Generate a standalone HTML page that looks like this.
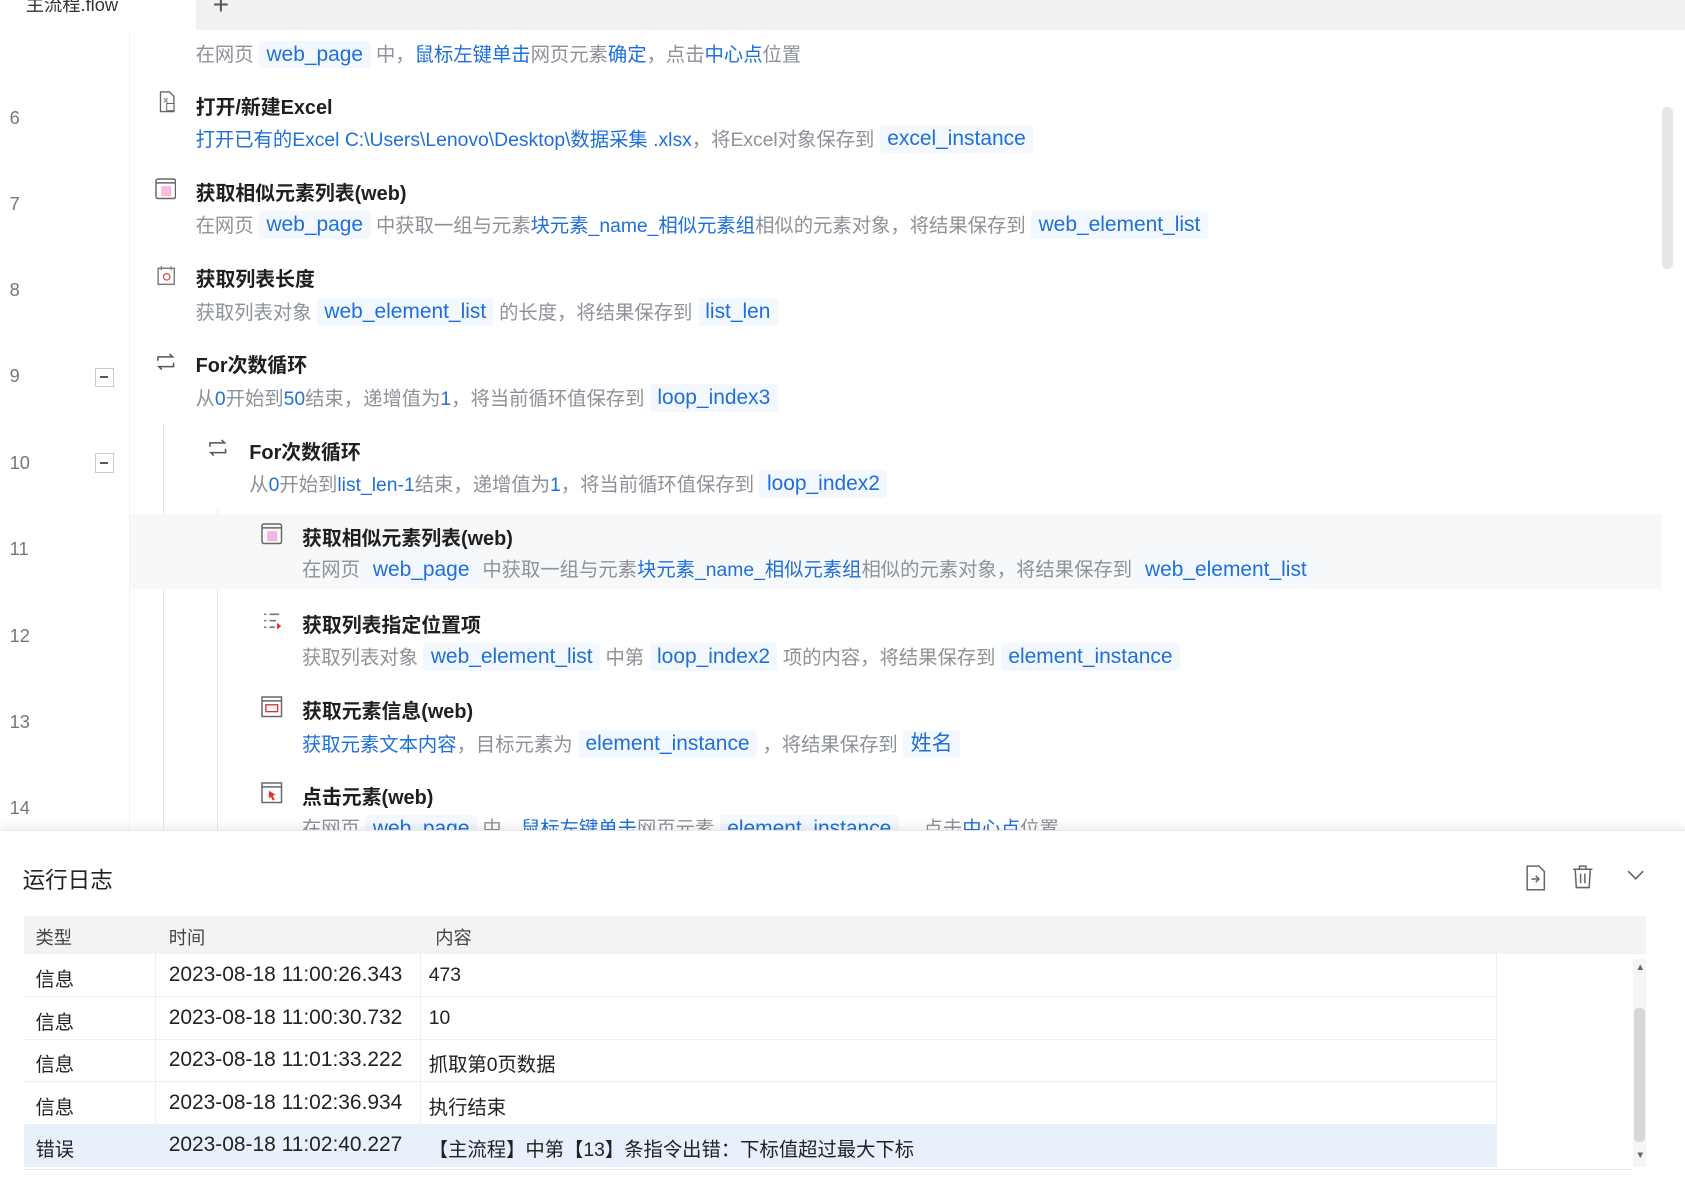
<!DOCTYPE html>
<html><head><meta charset="utf-8">
<style>
html,body{margin:0;padding:0;width:1685px;height:1190px;overflow:hidden;background:#fff;}
#w{position:relative;width:1568px;height:1107px;zoom:1.0746;font-family:"Liberation Sans","Noto Sans CJK SC",sans-serif;color:#222;}
.a{position:absolute;white-space:nowrap;}
.ln{position:absolute;left:9px;font-size:17px;color:#777;}
.t{position:absolute;font-size:18.5px;font-weight:bold;color:#1f1f1f;white-space:nowrap;}
.d{position:absolute;font-size:18px;color:#8d9199;white-space:nowrap;}
.b{color:#1e6fd9;}
.v{color:#1e6fd9;background:#f3f7fe;padding:2px 7px;font-size:19.5px;border-radius:3px;}
.ic{position:absolute;width:20px;height:20px;}
.cb{position:absolute;left:88px;width:16px;height:16px;border:1px solid #ccc;background:#fff;}
.cb:after{content:"";position:absolute;left:4px;top:7px;width:8px;height:1.5px;background:#555;}
.tr{position:absolute;left:0;width:1370px;height:39px;border-bottom:1px solid #eceef1;font-size:18px;}
.tr span{position:absolute;top:9px;}
.tr span.tm{font-size:19.5px;top:8px;}
</style></head><body><div id="w">
<div class="a" style="left:24px;top:-8px;font-size:17px;color:#333;">主流程.flow</div>
<div class="a" style="left:182px;top:0;width:1386px;height:28px;background:#f0f1f3;"></div>
<div class="a" style="left:198px;top:-10px;font-size:26px;color:#555;">+</div>
<div class="a" style="left:120px;top:28px;width:1px;height:745px;background:#f1f2f4;"></div>
<div class="a" style="left:152px;top:395px;width:1px;height:378px;background:#e6e8eb;"></div>
<div class="a" style="left:202px;top:475px;width:1px;height:298px;background:#e6e8eb;"></div>
<div class="a" style="left:121px;top:478px;width:1426px;height:70px;background:#f6f8fa;"></div>
<div class="a" style="left:1547px;top:100px;width:10px;height:150px;background:#e4e5e7;border-radius:5px;"></div>

<div class="d" style="left:182px;top:36px;">在网页 <span class="v">web_page</span> 中，<span class="b">鼠标左键单击</span>网页元素<span class="b">确定</span>，点击<span class="b">中心点</span>位置</div>

<div class="ln" style="top:100px;">6</div>
<svg class="ic" style="left:145px;top:85px" viewBox="0 0 20 24"><path d="M3 1h10l5 5v17H3z" fill="none" stroke="#666" stroke-width="1.5"/><path d="M7 8l4 5M11 8l-4 5" stroke="#888" stroke-width="1.3"/><rect x="10" y="14" width="8" height="8" fill="#fff" stroke="#555"/></svg>
<div class="t" style="left:182px;top:85px;">打开/新建Excel</div>
<div class="d" style="left:182px;top:115px;"><span class="b">打开已有的Excel C:\Users\Lenovo\Desktop\数据采集 .xlsx</span>，将Excel对象保存到 <span class="v">excel_instance</span></div>

<div class="ln" style="top:180px;">7</div>
<svg class="ic" style="left:144px;top:166px" viewBox="0 0 22 22"><rect x="1" y="1" width="20" height="20" rx="2" fill="none" stroke="#666" stroke-width="1.5"/><path d="M1 5h20" stroke="#666" stroke-width="1.5"/><rect x="7" y="9" width="9" height="9" fill="#f3c" opacity=".35" stroke="#d33"/></svg>
<div class="t" style="left:182px;top:165px;">获取相似元素列表(web)</div>
<div class="d" style="left:182px;top:195px;">在网页 <span class="v">web_page</span> 中获取一组与元素<span class="b">块元素_name_相似元素组</span>相似的元素对象，将结果保存到 <span class="v">web_element_list</span></div>

<div class="ln" style="top:260px;">8</div>
<svg class="ic" style="left:145px;top:247px" viewBox="0 0 20 20"><rect x="2" y="3" width="15" height="15" fill="none" stroke="#777" stroke-width="1.3"/><path d="M5 1v4M14 1v4" stroke="#777"/><circle cx="10" cy="11" r="3" fill="none" stroke="#d33"/></svg>
<div class="t" style="left:182px;top:245px;">获取列表长度</div>
<div class="d" style="left:182px;top:276px;">获取列表对象 <span class="v">web_element_list</span> 的长度，将结果保存到 <span class="v">list_len</span></div>

<div class="ln" style="top:340px;">9</div><div class="cb" style="top:342px;"></div>
<svg class="ic" style="left:144px;top:327px" viewBox="0 0 22 20"><path d="M3 9V5h15l-3-3M19 11v4H4l3 3" fill="none" stroke="#555" stroke-width="1.6"/></svg>
<div class="t" style="left:182px;top:325px;">For次数循环</div>
<div class="d" style="left:182px;top:356px;">从<span class="b">0</span>开始到<span class="b">50</span>结束，递增值为<span class="b">1</span>，将当前循环值保存到 <span class="v">loop_index3</span></div>

<div class="ln" style="top:421px;">10</div><div class="cb" style="top:422px;"></div>
<svg class="ic" style="left:193px;top:407px" viewBox="0 0 22 20"><path d="M3 9V5h15l-3-3M19 11v4H4l3 3" fill="none" stroke="#555" stroke-width="1.6"/></svg>
<div class="t" style="left:232px;top:406px;">For次数循环</div>
<div class="d" style="left:232px;top:436px;">从<span class="b">0</span>开始到<span class="b">list_len-1</span>结束，递增值为<span class="b">1</span>，将当前循环值保存到 <span class="v">loop_index2</span></div>

<div class="ln" style="top:501px;">11</div>
<svg class="ic" style="left:243px;top:487px" viewBox="0 0 22 22"><rect x="1" y="1" width="20" height="20" rx="2" fill="none" stroke="#666" stroke-width="1.5"/><path d="M1 5h20" stroke="#666" stroke-width="1.5"/><rect x="7" y="9" width="9" height="9" fill="#f3c" opacity=".35" stroke="#d33"/></svg>
<div class="t" style="left:281px;top:486px;">获取相似元素列表(web)</div>
<div class="d" style="left:281px;top:516px;">在网页 <span class="v">web_page</span> 中获取一组与元素<span class="b">块元素_name_相似元素组</span>相似的元素对象，将结果保存到 <span class="v">web_element_list</span></div>

<div class="ln" style="top:582px;">12</div>
<svg class="ic" style="left:244px;top:568px" viewBox="0 0 20 20"><path d="M2 4h2M7 4h9M2 10h2M7 10h6M2 16h2M7 16h5" stroke="#777" stroke-width="1.5"/><path d="M14 12l4 3-4 3z" fill="#d33"/></svg>
<div class="t" style="left:281px;top:567px;">获取列表指定位置项</div>
<div class="d" style="left:281px;top:597px;">获取列表对象 <span class="v">web_element_list</span> 中第 <span class="v">loop_index2</span> 项的内容，将结果保存到 <span class="v">element_instance</span></div>

<div class="ln" style="top:662px;">13</div>
<svg class="ic" style="left:243px;top:648px" viewBox="0 0 22 22"><rect x="1" y="1" width="20" height="20" fill="none" stroke="#666" stroke-width="1.5"/><path d="M1 5h20" stroke="#666" stroke-width="1.5"/><rect x="5" y="9" width="12" height="7" fill="none" stroke="#d33" stroke-width="1.4"/></svg>
<div class="t" style="left:281px;top:647px;">获取元素信息(web)</div>
<div class="d" style="left:281px;top:677px;"><span class="b">获取元素文本内容</span>，目标元素为 <span class="v">element_instance</span> ，将结果保存到 <span class="v">姓名</span></div>

<div class="ln" style="top:742px;">14</div>
<svg class="ic" style="left:243px;top:728px" viewBox="0 0 22 22"><rect x="1" y="1" width="20" height="20" fill="none" stroke="#666" stroke-width="1.5"/><path d="M1 5h20" stroke="#666" stroke-width="1.5"/><path d="M8 9l7 4-3 1 2 4-2 1-2-4-2 2z" fill="#d33"/></svg>
<div class="t" style="left:281px;top:727px;">点击元素(web)</div>
<div class="d" style="left:281px;top:757px;">在网页 <span class="v">web_page</span> 中，<span class="b">鼠标左键单击</span>网页元素 <span class="v">element_instance</span> ，点击<span class="b">中心点</span>位置</div>

<div class="a" style="left:0;top:772px;width:1568px;height:335px;background:#fff;box-shadow:0 -4px 6px rgba(0,0,0,.06);border-top:1px solid #e8e9eb;"></div>
<div class="a" style="left:21px;top:803px;font-size:21px;color:#222;">运行日志</div>
<svg class="a" style="left:1419px;top:805px" width="20" height="24" viewBox="0 0 20 24"><path d="M2 1h11l5 5v17H2z" fill="none" stroke="#666" stroke-width="1.4"/><path d="M6 13h7M10 10l3 3-3 3" fill="none" stroke="#666" stroke-width="1.4"/></svg>
<svg class="a" style="left:1463px;top:805px" width="20" height="22" viewBox="0 0 20 22"><path d="M1 4h18M7 4V1h6v3M3 4l1 17h12l1-17M8 8v9M12 8v9" fill="none" stroke="#666" stroke-width="1.4"/></svg>
<svg class="a" style="left:1513px;top:808px" width="18" height="14" viewBox="0 0 18 14"><path d="M2 3l7 7 7-7" fill="none" stroke="#666" stroke-width="1.5"/></svg>

<div class="a" style="left:22px;top:852px;width:1510px;height:36px;background:#f2f3f5;font-size:17px;color:#444;">
<span class="a" style="left:11px;top:8px;">类型</span><span class="a" style="left:135px;top:8px;">时间</span><span class="a" style="left:383px;top:8px;">内容</span></div>
<div class="a" style="left:22px;top:888px;width:1498px;height:200px;border-bottom:1px solid #e6e7ea;">
 <div class="tr" style="top:0"><span style="left:11px">信息</span><span class="tm" style="left:135px">2023-08-18 11:00:26.343</span><span style="left:377px">473</span></div>
 <div class="tr" style="top:40px"><span style="left:11px">信息</span><span class="tm" style="left:135px">2023-08-18 11:00:30.732</span><span style="left:377px">10</span></div>
 <div class="tr" style="top:79px"><span style="left:11px">信息</span><span class="tm" style="left:135px">2023-08-18 11:01:33.222</span><span style="left:377px">抓取第0页数据</span></div>
 <div class="tr" style="top:119px"><span style="left:11px">信息</span><span class="tm" style="left:135px">2023-08-18 11:02:36.934</span><span style="left:377px">执行结束</span></div>
 <div class="tr" style="top:158px;background:#e8f1fb;"><span style="left:11px">错误</span><span class="tm" style="left:135px">2023-08-18 11:02:40.227</span><span style="left:377px">【主流程】中第【13】条指令出错：下标值超过最大下标</span></div>
 <div class="a" style="left:122px;top:0;width:1px;height:198px;background:#eceef1;"></div>
 <div class="a" style="left:369px;top:0;width:1px;height:198px;background:#eceef1;"></div>
 <div class="a" style="left:1370px;top:0;width:1px;height:198px;background:#eceef1;"></div>
</div>
<div class="a" style="left:1520px;top:892px;width:12px;height:194px;background:#f5f5f6;"></div>
<div class="a" style="left:1521px;top:938px;width:10px;height:125px;background:#d6d7d9;border-radius:4px;"></div>
<div class="a" style="left:1522px;top:895px;font-size:9px;color:#666;">▲</div>
<div class="a" style="left:1522px;top:1070px;font-size:9px;color:#666;">▼</div>
</div></body></html>
